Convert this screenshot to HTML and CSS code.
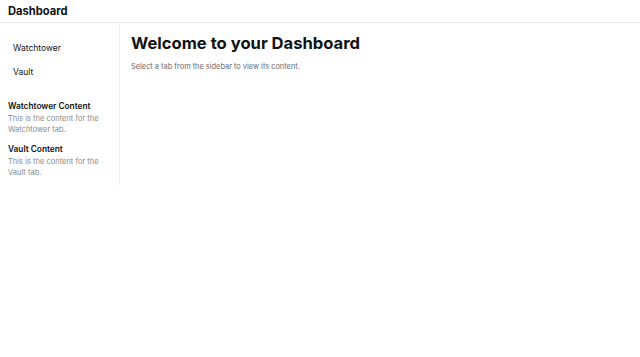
FILE: index.html
```html
<!DOCTYPE html>
<html>

<head>
  <link rel="stylesheet" href="styles.css">
</head>

<body>

  <header class="topbar">
    <h1>Dashboard</h1>
  </header>

  <div class="layout">
    <!-- Sidebar with tabs and the tab contents -->
    <aside class="sidebar">
      <nav class="tabs">
        <div class="tab">Watchtower</div>
        <div class="tab">Vault</div>
      </nav>

      <div class="panel">
        <h3>Watchtower Content</h3>
        <p>This is the content for the Watchtower tab.</p>
      </div>
      <div class="panel">
        <h3>Vault Content</h3>
        <p>This is the content for the Vault tab.</p>
      </div>
    </aside>

    <main class="main">
      <h2>Welcome to your Dashboard</h2>
      <p>Select a tab from the sidebar to view its content.</p>
    </main>
  </div>

</body>

</html>
```

FILE: styles.css
```css
body {
  margin: 0;
  font-family: Inter, "Noto Sans", sans-serif;
  color: #111111;
  background-color: #ffffff;
}

.topbar {
  height: 22px;
  border-bottom: 1px solid #e8e8e8;
  padding: 0 8px;
  display: flex;
  align-items: center;
}

.topbar h1 {
  margin: 0;
  font-size: 11.2px;
  line-height: 14px;
  font-weight: 700;
}

.layout {
  display: flex;
  align-items: flex-start;
}

.sidebar {
  width: 119px;
  border-right: 1px solid #ececec;
  padding: 19px 0 7px 0;
}

.tabs {
  display: flex;
  flex-direction: column;
  gap: 12px;
  padding: 0 13px;
}

.tab {
  font-size: 8.5px;
  line-height: 12px;
}

.panel {
  padding: 0 8px;
  margin-top: 9px;
}

.tabs + .panel {
  margin-top: 23px;
}

.panel h3 {
  margin: 0;
  font-size: 8.3px;
  line-height: 11px;
  font-weight: 600;
}

.panel p {
  margin: 1px 0 0 0;
  font-size: 7.5px;
  line-height: 11px;
  color: #8a8a8a;
}

.main {
  flex: 1;
  padding: 10px 11px;
}

.main h2 {
  margin: 0;
  font-size: 16.6px;
  line-height: 20px;
  font-weight: 700;
}

.main p {
  margin: 9px 0 0 0;
  font-size: 7.4px;
  line-height: 10px;
  color: #6a6a6a;
}
```
